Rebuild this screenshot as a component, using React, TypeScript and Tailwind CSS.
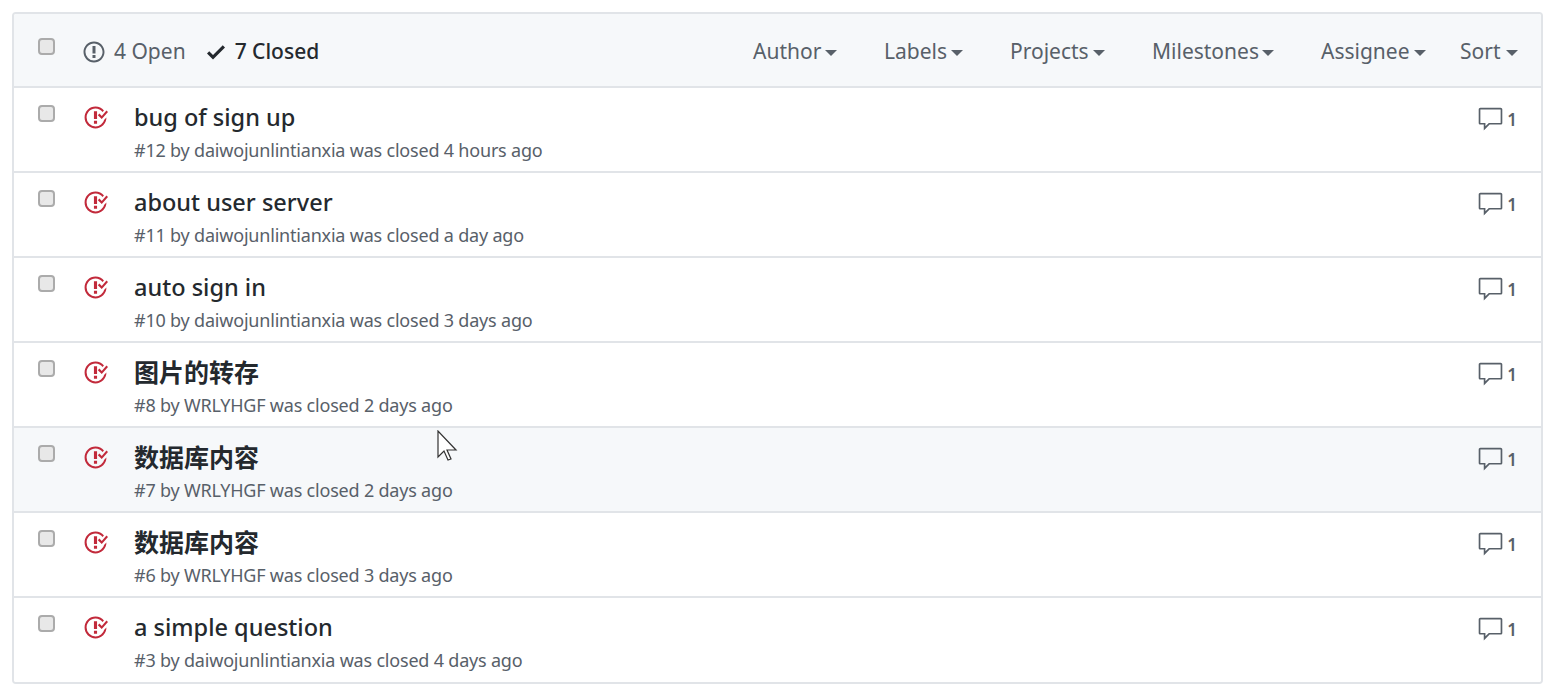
const issues = [
  { title: 'bug of sign up', meta: '#12 by daiwojunlintianxia was closed 4 hours ago' },
  { title: 'about user server', meta: '#11 by daiwojunlintianxia was closed a day ago' },
  { title: 'auto sign in', meta: '#10 by daiwojunlintianxia was closed 3 days ago' },
  { title: '图片的转存', meta: '#8 by WRLYHGF was closed 2 days ago', cjk: true },
  { title: '数据库内容', meta: '#7 by WRLYHGF was closed 2 days ago', cjk: true, hover: true },
  { title: '数据库内容', meta: '#6 by WRLYHGF was closed 3 days ago', cjk: true },
  { title: 'a simple question', meta: '#3 by daiwojunlintianxia was closed 4 days ago' },
]

const filters = [
  { label: 'Author', cls: 'w-[84px]' },
  { label: 'Labels', cls: 'w-[79px]' },
  { label: 'Projects', cls: 'w-[95px]' },
  { label: 'Milestones', cls: 'w-[122px]' },
  { label: 'Assignee', cls: 'w-[105px] mr-[-13px]' },
  { label: 'Sort', cls: 'w-[58px]' },
]

function Checkbox() {
  return <div className="w-[17px] h-[17px] rounded-[4px] bg-[#e8e8e8] border-2 border-[#ababab]" />
}

function Caret() {
  return <span className="mt-[2px] w-0 h-0 border-x-[6px] border-x-transparent border-t-[6px] border-t-[#586069]" />
}

function IssueClosed() {
  return (
    <svg className="w-[25px] h-[25px] fill-[#c22a3b]" viewBox="0 0 16 16">
      <path d="M7 10h2v2H7v-2zm2-6H7v5h2V4zm1.5 1.5l-1 1L12 9l4-4.5-1-1L12 7l-1.5-1.5zM8 13.7A5.71 5.71 0 0 1 2.3 8c0-3.14 2.56-5.7 5.7-5.7 1.83 0 3.45.88 4.5 2.2l.92-.92A6.947 6.947 0 0 0 8 1C4.14 1 1 4.14 1 8s3.14 7 7 7 7-3.14 7-7l-1.42 1.42A5.71 5.71 0 0 1 8 13.7z" />
    </svg>
  )
}

export default function App() {
  return (
    <div className="min-h-screen bg-white pt-[12px] px-[12px] font-['Noto_Sans','Noto_Sans_CJK_SC',sans-serif]">
      <div className="relative w-[1531px] border-2 border-[#e1e4e8] rounded-[4px] overflow-hidden">
        <div className="h-[72px] bg-[#f6f8fa] flex items-center pl-[24px] pr-[23px]">
          <div className="mb-[8px]">
            <Checkbox />
          </div>
          <div className="ml-[28px] pt-[4px] flex items-center text-[21px] text-[#586069]">
            <svg className="w-[22px] h-[24px] fill-[#586069]" viewBox="0 0 14 16">
              <path d="M7 2.3c3.14 0 5.7 2.56 5.7 5.7s-2.56 5.7-5.7 5.7A5.71 5.71 0 0 1 1.3 8c0-3.14 2.56-5.7 5.7-5.7zM7 1C3.14 1 0 4.14 0 8s3.14 7 7 7 7-3.14 7-7-3.14-7-7-7zm1 3H6v5h2V4zm0 6H6v2h2v-2z" />
            </svg>
            <span className="ml-[9px]">4 Open</span>
            <svg className="ml-[21px] w-[18px] h-[24px] fill-[#24292e]" viewBox="0 0 12 16">
              <path d="M12 5l-8 8-4-4 1.5-1.5L4 10l6.5-6.5L12 5z" />
            </svg>
            <span className="ml-[10px] text-[#24292e] font-medium">7 Closed</span>
          </div>
          <div className="ml-auto pt-[4px] flex items-center gap-[47px] text-[21px] text-[#586069]">
            {filters.map((f) => (
              <div key={f.label} className={`${f.cls} flex items-center justify-between`}>
                {f.label}
                <Caret />
              </div>
            ))}
          </div>
        </div>
        {issues.map((issue, i) => (
          <div
            key={i}
            className={`border-t-2 border-[#e1e4e8] flex pl-[24px] pr-[24px] ${i === issues.length - 1 ? 'h-[86px]' : 'h-[85px]'} ${issue.hover ? 'bg-[#f6f8fa]' : 'bg-white'}`}
          >
            <div className="pt-[17px]">
              <Checkbox />
            </div>
            <div className="ml-[28px] pt-[17px]">
              <IssueClosed />
            </div>
            <div className="ml-[26px] flex-1 pt-[13px]">
              <div className={`leading-[32px] text-[#24292e] ${issue.cjk ? 'text-[25px] font-bold' : 'text-[23.5px] font-medium'}`}>
                {issue.title}
              </div>
              <div className="mt-[5px] text-[18px] leading-[24px] text-[#586069] tracking-[-0.2px]">{issue.meta}</div>
            </div>
            <div className="pt-[18px] flex items-start text-[#586069]">
              <svg className="w-[27px] h-[27px] fill-[#586069]" viewBox="0 0 16 16">
                <path d="M14 1H2c-.55 0-1 .45-1 1v8c0 .55.45 1 1 1h2v3.5L7.5 11H14c.55 0 1-.45 1-1V2c0-.55-.45-1-1-1zm0 9H7l-2 2v-2H2V2h12v8z" />
              </svg>
              <span className="ml-[3px] pt-[2px] text-[17px] leading-[24px] font-semibold">1</span>
            </div>
          </div>
        ))}
        <svg className="absolute left-[423px] top-[416px] w-[22px] h-[32px]" viewBox="0 0 22 32">
          <path d="M1 1v26l6-6 4 9 3-1-4-9h9z" fill="#fff" stroke="#333" strokeWidth="1.2" />
        </svg>
      </div>
    </div>
  )
}
